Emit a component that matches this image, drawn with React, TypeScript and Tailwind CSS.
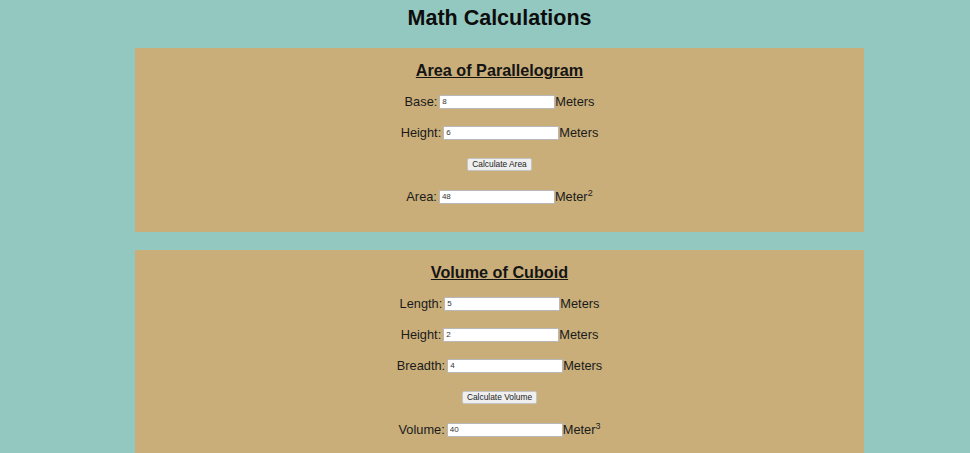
import React from "react"

type Field = { label: string; value: string; unit: string; sup?: string }

const Row = ({ f, extra = "" }: { f: Field; extra?: string }) => (
  <div className={`h-[31px] flex items-center justify-center text-[12.8px] text-[#1a1a1a] ${extra}`}>
    <span>{f.label}:</span>
    <input
      readOnly
      value={f.value}
      className="w-[116px] h-[14px] ml-[2px] px-[2px] bg-white border border-[#b8b8b8] text-[8px] text-[#333] outline-none"
    />
    <span>
      {f.unit}
      {f.sup && <sup className="text-[9px] -top-[5px]">{f.sup}</sup>}
    </span>
  </div>
)

const Panel = ({
  title,
  inputs,
  button,
  result,
}: {
  title: string
  inputs: Field[]
  button: string
  result: Field
}) => (
  <section className="bg-[#c9ae7a] pt-[7px] pb-[20px]">
    <h2 className="h-[31px] flex items-center justify-center text-[16.2px] font-bold underline text-[#141414]">
      {title}
    </h2>
    {inputs.map((f, i) => (
      <Row key={i} f={f} />
    ))}
    <div className="h-[31px] mt-[1px] flex items-center justify-center">
      <button className="h-[13px] px-[4px] bg-[#efefef] border border-[#c4c4c4] rounded-[2px] text-[8.4px] leading-none text-[#222]">
        {button}
      </button>
    </div>
    <Row f={result} extra="mt-[1px]" />
  </section>
)

export default function App() {
  return (
    <div className="min-h-screen bg-[#93c8c0] font-['Liberation_Sans',Arial,sans-serif]">
      <div className="ml-[135px] w-[729px]">
        <h1 className="h-[36px] flex items-center justify-center text-[21.5px] font-bold text-[#0d0d0d]">
          Math Calculations
        </h1>
        <div className="mt-[12px] flex flex-col gap-[18px]">
          <Panel
            title="Area of Parallelogram"
            inputs={[
              { label: "Base", value: "8", unit: "Meters" },
              { label: "Height", value: "6", unit: "Meters" },
            ]}
            button="Calculate Area"
            result={{ label: "Area", value: "48", unit: "Meter", sup: "2" }}
          />
          <Panel
            title="Volume of Cuboid"
            inputs={[
              { label: "Length", value: "5", unit: "Meters" },
              { label: "Height", value: "2", unit: "Meters" },
              { label: "Breadth", value: "4", unit: "Meters" },
            ]}
            button="Calculate Volume"
            result={{ label: "Volume", value: "40", unit: "Meter", sup: "3" }}
          />
        </div>
      </div>
    </div>
  )
}
